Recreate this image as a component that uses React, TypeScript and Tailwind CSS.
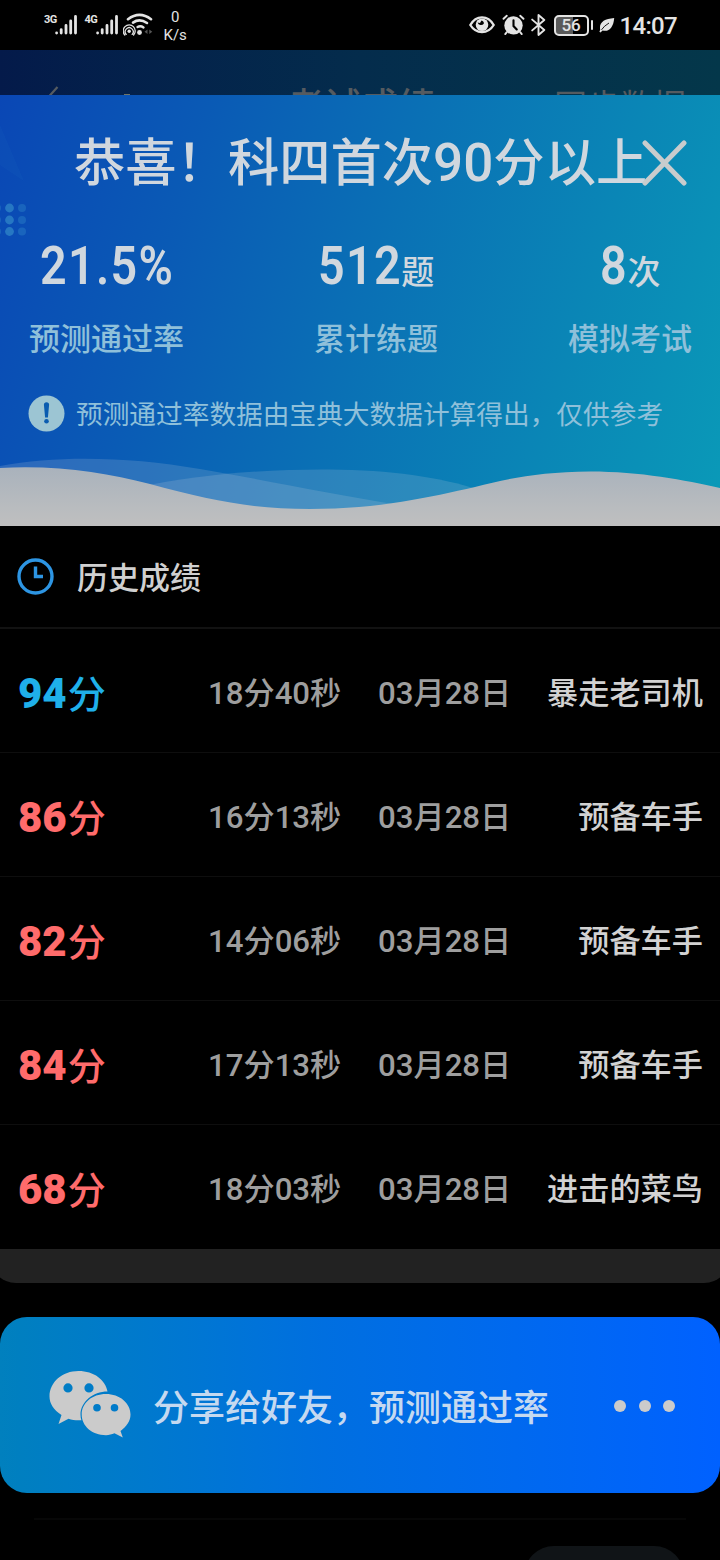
type Score = {
  score: number;
  time: string;
  date: string;
  title: string;
};

const scores: Score[] = [
  { score: 94, time: "18分40秒", date: "03月28日", title: "暴走老司机" },
  { score: 86, time: "16分13秒", date: "03月28日", title: "预备车手" },
  { score: 82, time: "14分06秒", date: "03月28日", title: "预备车手" },
  { score: 84, time: "17分13秒", date: "03月28日", title: "预备车手" },
  { score: 68, time: "18分03秒", date: "03月28日", title: "进击的菜鸟" },
];

function Signal({ label }: { label: string }) {
  return (
    <div className="flex h-[22px] items-start">
      <span className="w-[11px] text-[11px] leading-[11px] font-bold tracking-[-0.5px] whitespace-nowrap">
        {label}
      </span>
      <svg width="23" height="22" viewBox="0 0 23 22" fill="none" stroke="currentColor" strokeWidth="2.8" strokeLinecap="round">
        <path d="M1.6 19v.1M6.2 15.6V19M11 11.5V19M15.7 7V19M20.5 2.4V19" />
      </svg>
    </div>
  );
}

function StatusBar() {
  return (
    <div className="flex h-[50px] items-center justify-between pr-[43px] pl-[44px] text-[#e4e4e4]">
      <div className="flex items-center">
        <div className="flex gap-[6.5px]">
          <Signal label="3G" />
          <Signal label="4G" />
        </div>
        <svg className="ml-[4px]" width="30" height="24" viewBox="0 0 30 24" fill="none" stroke="currentColor" strokeLinecap="round">
          <path d="M5 6.2Q16.5-2.5 28 6.2" strokeWidth="2.6" />
          <path d="M10 9.6Q16.5 5 24 10" strokeWidth="2.6" />
          <path d="M14.5 14Q17.5 12.4 20.5 14.4" strokeWidth="2.4" />
          <circle cx="16.5" cy="19.5" r="2.4" fill="currentColor" stroke="none" />
          <circle cx="6.2" cy="18.3" r="1.7" fill="currentColor" stroke="none" />
          <path d="M3.2 21.4a4 4 0 1 1 6 0M1.8 22a6 6 0 1 1 8.8 0" strokeWidth="1.3" />
          <path d="M24.5 16.5l-3 2.2 3 2.2zM26.3 16.5l3 2.2-3 2.2z" fill="#555" stroke="none" />
        </svg>
        <div className="ml-[11px] flex flex-col items-center pt-[2px] text-[15px] leading-[18px]">
          <span>0</span>
          <span>K/s</span>
        </div>
      </div>

      <div className="flex items-center">
        <svg width="26" height="20" viewBox="0 0 26 20" fill="none" stroke="currentColor">
          <path d="M1.3 10C7 -.2 19 -.2 24.7 10C19 19.4 7 19.4 1.3 10Z" strokeWidth="2.3" />
          <circle cx="13" cy="9.8" r="6.3" fill="currentColor" stroke="none" />
          <path d="M8.6 7.6a3.6 3.6 0 0 0 6.2 1.2A3 3 0 0 0 12.5 5.5L11 8Z" fill="#000" stroke="none" />
        </svg>
        <svg className="ml-[7px]" width="23" height="24" viewBox="0 0 24 24" fill="none" stroke="currentColor" strokeLinecap="round">
          <circle cx="12" cy="12.4" r="9.6" fill="currentColor" stroke="none" />
          <path d="M1.6 5.5L5 2.4M22.4 5.5L19 2.4M5 19.5L3.4 21.5M19 19.5l1.6 2" strokeWidth="2" />
          <path d="M12 7v6l3.4 3.6" stroke="#000" strokeWidth="2.2" />
        </svg>
        <svg className="ml-[6px]" width="15" height="24" viewBox="0 0 15 24" fill="none" stroke="currentColor" strokeWidth="1.9" strokeLinejoin="round" strokeLinecap="round">
          <path d="M1.2 6.6L13.3 17 7.5 22V2l5.8 5L1.2 17.4" />
        </svg>
        <div className="ml-[8px] flex h-[21px] w-[35px] items-center justify-center rounded-[5px] border-2 border-[#e4e4e4] bg-linear-to-r from-[#5a5a5a] from-55% to-black to-55% text-[17px] leading-none font-medium">
          56
        </div>
        <div className="ml-[2px] h-[10px] w-[2px] rounded bg-[#e4e4e4]" />
        <svg className="ml-[6px]" width="16" height="16" viewBox="0 0 16 16">
          <path d="M1.2 12.8C-.2 5.5 5 1.8 15.2 1C14.6 10.5 9.5 15.5 3.6 13.4L1.5 15.6.4 14.8Z" fill="currentColor" />
          <path d="M2.5 12.8Q5 9 10 6" fill="none" stroke="#000" strokeWidth=".9" />
        </svg>
        <span className="ml-[5px] pt-[2px] text-[24px] leading-[28px] font-medium tracking-[-0.7px]">14:07</span>
      </div>
    </div>
  );
}

function PageHeader() {
  return (
    <div className="relative h-[45px] overflow-hidden bg-linear-to-r from-[#041a4a] via-[#042c4c] to-[#04374a] text-[#555b60]">
      <div className="flex h-[104px] items-center pt-[9px] pr-[34px] pl-[42px]">
        <svg className="-mt-[10px]" width="20" height="36" viewBox="0 0 20 36" fill="none" stroke="currentColor" strokeWidth="2.2">
          <path d="M15.5 3L2 18l13.5 15" />
        </svg>
        <div className="ml-[225px] w-[148px] pt-[2px] text-[37px] leading-[44px] font-medium">考试成绩</div>
        <div className="ml-auto text-[33px] leading-[40px]">同步数据</div>
      </div>
      <div className="absolute bottom-0 left-[124px] h-px w-[6px] bg-[#6f7466]" />
    </div>
  );
}

type StatProps = { value: string; unit?: string; label: string; valueClass: string };

function Stat({ value, unit, label, valueClass }: StatProps) {
  return (
    <div className="flex flex-col items-center">
      <div className="flex h-[56px] items-baseline text-[#d0d7de]">
        <span className={`inline-block origin-left scale-x-[0.88] text-[53px] leading-[56px] font-semibold tracking-[1.5px] ${valueClass}`}>
          {value}
        </span>
        {unit && <span className="text-[33px] leading-[40px] font-medium">{unit}</span>}
      </div>
      <div className="mt-[26px] text-[31px] leading-[40px] font-medium text-[#8fc0da]">{label}</div>
    </div>
  );
}

function Banner() {
  return (
    <section className="relative h-[431px] overflow-hidden bg-[linear-gradient(107deg,#0a47b5_0%,#0a5ab5_25%,#0a70b5_50%,#0a86b6_76%,#0a9ab8_100%)]">
      {/* decorations */}
      <svg className="absolute top-0 left-0" width="30" height="150" viewBox="0 0 30 150" fill="#3d9bd0">
        <path d="M0 30L24 86 0 70Z" opacity=".05" />
        <g opacity=".55">
          <circle cx="9.5" cy="113" r="4.4" />
          <circle cx="9.5" cy="125" r="4.4" />
          <circle cx="9.5" cy="136.5" r="4.4" />
        </g>
        <g opacity=".3">
          <circle cx="22" cy="113" r="4" />
          <circle cx="22" cy="125" r="4" />
          <circle cx="22" cy="136.5" r="4" />
          <circle cx="-3" cy="113" r="4" />
          <circle cx="-3" cy="125" r="4" />
          <circle cx="-3" cy="136.5" r="4" />
        </g>
      </svg>
      <svg className="absolute bottom-0 left-0" width="720" height="76" viewBox="0 450 720 76">
        <defs>
          <linearGradient id="wave" x1="0" y1="0" x2="0" y2="1">
            <stop offset="0" stopColor="#a9b2bc" />
            <stop offset=".7" stopColor="#b9bcbf" />
            <stop offset="1" stopColor="#bfbfbf" />
          </linearGradient>
        </defs>
        <path d="M0 466C60 455 130 457 200 469C270 481 330 494 400 505L300 526H0Z" fill="#c8d0dc" opacity=".18" />
        <path d="M140 487C200 474 270 469 330 469.5C390 470 440 477 480 490L400 526H200Z" fill="#c8d0dc" opacity=".18" />
        <path d="M0 468C60 465 105 473 150 484C210 500 250 509 310 509C380 509 430 497 475 487C510 478 540 472 590 471.5C640 471.5 685 480 720 488V526H0Z" fill="url(#wave)" />
      </svg>

      <div className="relative">
        <div className="mt-[34px] flex h-[66px] items-center pt-[3px] pl-[74px] text-[51.3px] leading-[66px] font-medium text-[#d0d7de]">
          <h1 className="whitespace-nowrap">
            恭喜！科四首次<span className="text-[53px]">90</span>分以上
          </h1>
          <svg className="-mt-px -ml-[5px] shrink-0" width="46" height="46" viewBox="0 0 46 46" stroke="#c9cccd" strokeWidth="5" strokeLinecap="round">
            <path d="M3 3L42 43M42 3L3 43" />
          </svg>
        </div>

        <div className="mt-[43px] flex justify-between pr-[28px] pl-[29px]">
          <Stat value="21.5%" label="预测通过率" valueClass="-mr-[19px]" />
          <Stat value="512" unit="题" label="累计练题" valueClass="-mr-[12px]" />
          <Stat value="8" unit="次" label="模拟考试" valueClass="-mr-[4px]" />
        </div>

        <div className="mt-[33px] flex h-[40px] items-center pl-[28px]">
          <svg width="37" height="37" viewBox="0 0 37 37" fill="#0a5cb0">
            <circle cx="18.5" cy="18.5" r="18" fill="#9cc5d3" />
            <path d="M15.9 9.8a2.6 2.6 0 0 1 5.2 0L19.9 22.5h-2.8Z" />
            <circle cx="18.5" cy="26.2" r="2.3" />
          </svg>
          <span className="ml-[11px] pt-[3px] text-[26.7px] leading-[40px] text-[#8fc0da]">
            预测通过率数据由宝典大数据计算得出，仅供参考
          </span>
        </div>
      </div>
    </section>
  );
}

function ScoreRow({ item }: { item: Score }) {
  return (
    <li className="flex h-[124px] items-center border-b border-[#0e0e0e] pt-[7px] pr-[17px] pl-[18px] last:border-transparent">
      <div
        className={`flex w-[190px] items-baseline ${item.score >= 90 ? "text-[#1fb0ea]" : "text-[#ff6b6b]"}`}
      >
        <span className="text-[42px] leading-[56px] font-black">{item.score}</span>
        <span className="ml-[1px] text-[38px] leading-[50px] font-medium">分</span>
      </div>
      <div className="w-[170px] text-[31.2px] leading-[44px] font-medium text-[#9e9e9e]">{item.time}</div>
      <div className="text-[31.2px] leading-[44px] font-medium text-[#9e9e9e]">{item.date}</div>
      <div className="ml-auto text-[31.2px] leading-[44px] font-medium text-[#d2d2d2]">{item.title}</div>
    </li>
  );
}

function History() {
  return (
    <section>
      <div className="flex h-[103px] items-center border-b-2 border-[#121212] pl-[17px]">
        <svg width="37" height="37" viewBox="0 0 37 37" fill="none" stroke="#2d95e3" strokeWidth="3.4">
          <circle cx="18.5" cy="18.5" r="16.5" />
          <path d="M18.5 8.5V18.5H26" />
        </svg>
        <h2 className="ml-[23px] pt-[5px] text-[31px] leading-[44px] font-medium text-[#d0d0d0]">历史成绩</h2>
      </div>
      <ul>
        {scores.map((item, i) => (
          <ScoreRow key={i} item={item} />
        ))}
      </ul>
      <div className="-mx-[10px] h-[34px] rounded-b-[26px] bg-[#222]" />
    </section>
  );
}

function ShareCard() {
  return (
    <button className="mt-[34px] flex h-[176px] w-full items-center rounded-[27px] bg-linear-to-r from-[#0180be] via-[#006fe0] via-45% to-[#0061ff] pt-[2px] pr-[45px] pl-[49px] text-left">
      <svg width="82" height="67" viewBox="0 0 82 67" fill="#cbcbcb" className="-mt-[3px]">
        <path
          fillRule="evenodd"
          d="M29.5 0C45 0 56.5 9 58.5 20.5C44 20.5 31.5 31 31.5 43.5C31.5 45.5 31.8 47.3 32.4 49.2C27.5 49.6 23.5 49 19.5 47.7L9.5 53 12.5 44C4.5 39 .5 32.5 .5 25.5C.5 11 13.5 0 29.5 0ZM19 12.3a4.6 4.6 0 1 0 0 9.2 4.6 4.6 0 1 0 0-9.2ZM40 12.3a4.6 4.6 0 1 0 0 9.2 4.6 4.6 0 1 0 0-9.2Z"
        />
        <path
          fillRule="evenodd"
          d="M57 23C70.5 23 81.5 32 81.5 43.5C81.5 50 77.5 55.5 71.5 60L73.8 66.5 65.5 62.3C62.8 63.4 60 64.2 57 64.2C43 64.2 32.7 55 32.7 43.5C32.7 32 43 23 57 23ZM48 33a3.8 3.8 0 1 0 0 7.6 3.8 3.8 0 1 0 0-7.6ZM65.5 33a3.8 3.8 0 1 0 0 7.6 3.8 3.8 0 1 0 0-7.6Z"
        />
      </svg>
      <span className="ml-[22px] pt-[6px] text-[36px] leading-[50px] font-medium text-[#c5d9f0]">分享给好友，预测通过率</span>
      <span className="ml-auto flex gap-[12.5px]">
        <i className="size-[12px] rounded-full bg-[#cbcbcb]" />
        <i className="size-[12px] rounded-full bg-[#cbcbcb]" />
        <i className="size-[12px] rounded-full bg-[#cbcbcb]" />
      </span>
    </button>
  );
}

export default function App() {
  return (
    <div className="h-[1560px] w-[720px] overflow-hidden bg-black font-[Roboto,'Noto_Sans_CJK_SC',sans-serif]">
      <StatusBar />
      <PageHeader />
      <Banner />
      <History />
      <ShareCard />
      <div className="mx-[34px] mt-[25px] border-t-2 border-[#070707]" />
      <div className="mt-[26px] mr-[36px] ml-auto h-[60px] w-[160px] rounded-[30px] bg-[#101417]" />
    </div>
  );
}
